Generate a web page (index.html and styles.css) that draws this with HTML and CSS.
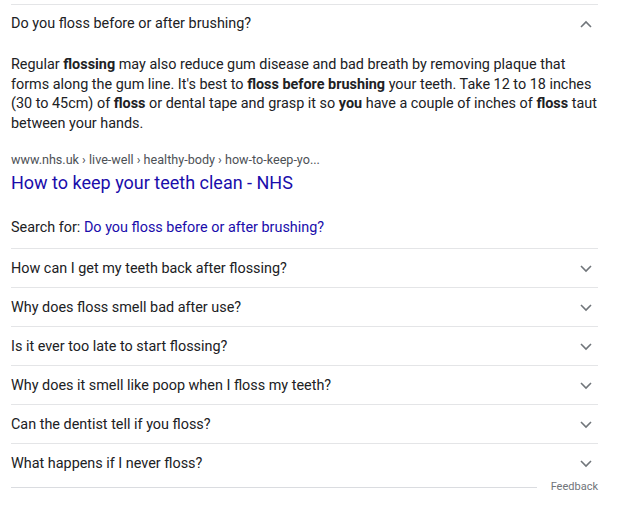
FILE: index.html
```html
<!DOCTYPE html>
<html>
<head>
<meta charset="utf-8">
<link rel="stylesheet" href="styles.css">
</head>
<body>
<div class="paa">
  <div class="qa open">
    <div class="q">
      <span class="q-text">Do you floss before or after brushing?</span>
      <svg class="chev" width="12" height="8" viewBox="0 0 12 8"><path d="M1 7 L6 2 L11 7" fill="none" stroke="#70757a" stroke-width="1.6"/></svg>
    </div>
    <div class="answer">
      <p class="snippet">Regular <b>flossing</b> may also reduce gum disease and bad breath by removing plaque that forms along the gum line. It's best to <b>floss before brushing</b> your teeth. Take 12 to 18 inches (30 to 45cm) of <b>floss</b> or dental tape and grasp it so <b>you</b> have a couple of inches of <b>floss</b> taut between your hands.</p>
      <div class="crumb">www.nhs.uk › live-well › healthy-body › how-to-keep-yo...</div>
      <a class="title" href="#">How to keep your teeth clean - NHS</a>
      <div class="search-for">Search for: <a href="#">Do you floss before or after brushing?</a></div>
    </div>
  </div>
  <div class="qa"><div class="q"><span class="q-text">How can I get my teeth back after flossing?</span><svg class="chev" width="12" height="8" viewBox="0 0 12 8"><path d="M1 1 L6 6 L11 1" fill="none" stroke="#70757a" stroke-width="1.6"/></svg></div></div>
  <div class="qa"><div class="q"><span class="q-text">Why does floss smell bad after use?</span><svg class="chev" width="12" height="8" viewBox="0 0 12 8"><path d="M1 1 L6 6 L11 1" fill="none" stroke="#70757a" stroke-width="1.6"/></svg></div></div>
  <div class="qa"><div class="q"><span class="q-text">Is it ever too late to start flossing?</span><svg class="chev" width="12" height="8" viewBox="0 0 12 8"><path d="M1 1 L6 6 L11 1" fill="none" stroke="#70757a" stroke-width="1.6"/></svg></div></div>
  <div class="qa"><div class="q"><span class="q-text">Why does it smell like poop when I floss my teeth?</span><svg class="chev" width="12" height="8" viewBox="0 0 12 8"><path d="M1 1 L6 6 L11 1" fill="none" stroke="#70757a" stroke-width="1.6"/></svg></div></div>
  <div class="qa"><div class="q"><span class="q-text">Can the dentist tell if you floss?</span><svg class="chev" width="12" height="8" viewBox="0 0 12 8"><path d="M1 1 L6 6 L11 1" fill="none" stroke="#70757a" stroke-width="1.6"/></svg></div></div>
  <div class="qa"><div class="q"><span class="q-text">What happens if I never floss?</span><svg class="chev" width="12" height="8" viewBox="0 0 12 8"><path d="M1 1 L6 6 L11 1" fill="none" stroke="#70757a" stroke-width="1.6"/></svg></div></div>
  <div class="footer">
    <div class="rule"></div>
    <span class="feedback">Feedback</span>
  </div>
</div>
</body>
</html>
```
FILE: styles.css
```css
html, body {
  margin: 0;
  padding: 0;
  background: #fff;
}
body {
  font-family: Roboto, "Liberation Sans", Arial, sans-serif;
  color: #202124;
}
.paa {
  margin: 4px 0 0 11px;
  width: 587px;
}
.qa {
  border-top: 1px solid #e4e5e7;
}
.q {
  height: 38px;
  display: flex;
  align-items: center;
  justify-content: space-between;
  font-size: 14.4px;
  line-height: 20px;
  padding-top: 1px;
  box-sizing: border-box;
}
.open .q {
  height: 37px;
}
.chev {
  margin-right: 6px;
  display: block;
}
.answer {
  padding-bottom: 10px;
}
.snippet {
  margin: 13px 0 0 0;
  font-size: 14.4px;
  line-height: 19.5px;
}
.snippet b {
  font-weight: 700;
}
.crumb {
  margin-top: 18px;
  font-size: 12.6px;
  line-height: 18px;
  color: #4d5156;
}
.title {
  display: block;
  margin-top: 3px;
  font-size: 18px;
  line-height: 22px;
  color: #1a0dab;
  text-decoration: none;
}
.search-for {
  margin-top: 24px;
  font-size: 14.4px;
  line-height: 20px;
}
.search-for a {
  color: #1a0dab;
  text-decoration: none;
}
.footer {
  display: flex;
  align-items: center;
  gap: 14px;
  height: 10px;
}
.rule {
  flex: 1;
  border-top: 1px solid #dadce0;
}
.feedback {
  font-size: 11px;
  line-height: 10px;
  color: #70757a;
}
```
